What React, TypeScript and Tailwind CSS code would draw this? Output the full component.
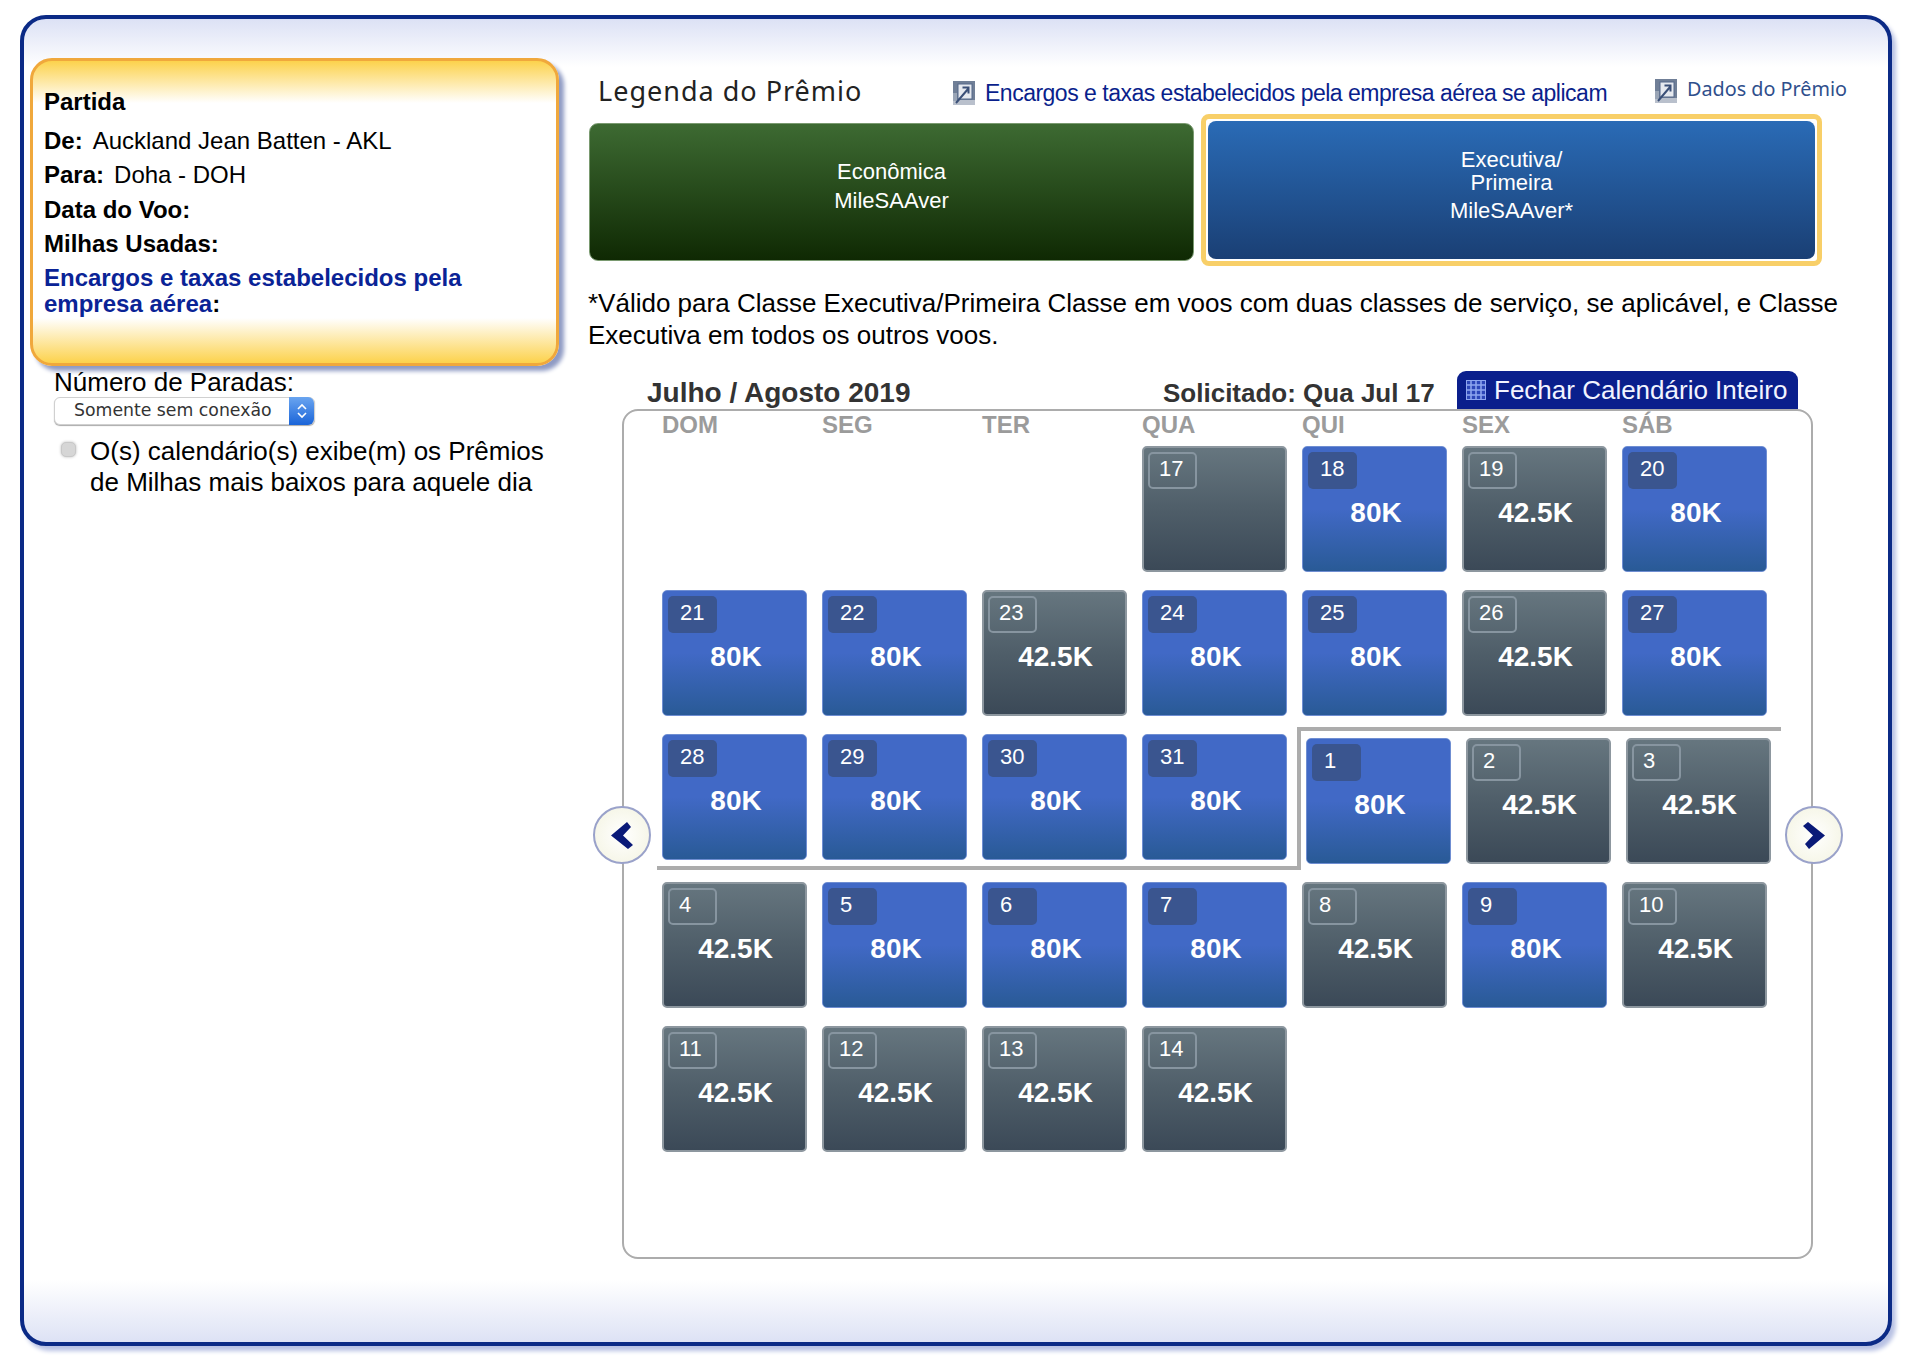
const days = [
  { d: 17 },
  { d: 18, v: '80K' },
  { d: 19, v: '42.5K' },
  { d: 20, v: '80K' },
  { d: 21, v: '80K' },
  { d: 22, v: '80K' },
  { d: 23, v: '42.5K' },
  { d: 24, v: '80K' },
  { d: 25, v: '80K' },
  { d: 26, v: '42.5K' },
  { d: 27, v: '80K' },
  { d: 28, v: '80K' },
  { d: 29, v: '80K' },
  { d: 30, v: '80K' },
  { d: 31, v: '80K' },
  { d: 1, v: '80K', aug: true },
  { d: 2, v: '42.5K', aug: true },
  { d: 3, v: '42.5K', aug: true },
  { d: 4, v: '42.5K' },
  { d: 5, v: '80K' },
  { d: 6, v: '80K' },
  { d: 7, v: '80K' },
  { d: 8, v: '42.5K' },
  { d: 9, v: '80K' },
  { d: 10, v: '42.5K' },
  { d: 11, v: '42.5K' },
  { d: 12, v: '42.5K' },
  { d: 13, v: '42.5K' },
  { d: 14, v: '42.5K' },
];

const weekdays = ['DOM', 'SEG', 'TER', 'QUA', 'QUI', 'SEX', 'SÁB'];

function PopupIcon({ className }: { className: string }) {
  return (
    <svg viewBox="0 0 22 24" className={className}>
      <rect x="0" y="0" width="22" height="24" fill="#707f97" />
      <rect x="0" y="19" width="22" height="5" fill="#b9c0cc" />
      <rect x="0" y="12" width="4" height="8" fill="#9aa5b6" />
      <rect x="5" y="3" width="14" height="15" fill="#e6e9ef" stroke="#55688a" strokeWidth="1" />
      <path d="M3 22 L15 8 M9.5 6.5 H15.5 V12.5" fill="none" stroke="#3b5078" strokeWidth="2" />
    </svg>
  );
}

function DayCell({ d, v, aug }: { d: number; v?: string; aug?: boolean }) {
  const blue = v === '80K';
  return (
    <div
      className={`flex h-[126px] w-[145px] flex-col rounded-[5px] ${aug ? 'mt-1 ml-1' : ''} ${
        blue
          ? 'border border-[#6f8ed2] bg-[linear-gradient(#4169c6_0,#4169c6_50%,#295a96_100%)] pt-[5px] pl-[5px]'
          : 'border-2 border-[#8d979f] bg-[linear-gradient(#66767f_0,#4f5e69_50%,#3b4957_100%)] pt-1 pl-1'
      }`}
    >
      <div
        className={`flex h-[37px] w-[49px] items-center rounded-[5px] pb-[4px] text-[22px] text-white ${
          blue ? 'bg-[#3a558f] pl-[12px]' : 'border-2 border-[#8795a0] pl-[9px]'
        }`}
      >
        {d}
      </div>
      {v && <div className="mt-[7px] pr-[2px] text-center text-[28px] leading-[34px] font-bold text-white">{v}</div>}
    </div>
  );
}

function NavArrow({ side }: { side: 'left' | 'right' }) {
  return (
    <div
      className={`absolute top-[436px] flex h-[58px] w-[58px] items-center justify-center rounded-full border-2 border-[#9aa2ca] bg-[radial-gradient(#fff,#f3f3e0)] ${
        side === 'left' ? '-left-[29px]' : '-right-[30px]'
      }`}
    >
      <svg viewBox="0 0 22 27" className={`h-[27px] w-[22px] ${side === 'right' ? 'rotate-180' : ''}`}>
        <path d="M0 13.5 L16 0 L20 5 L12 13.5 L22 23 L17 27 Z" fill="#0a1a78" />
      </svg>
    </div>
  );
}

export default function App() {
  return (
    <div className="h-[1368px] w-[1922px] bg-white pt-[15px] pl-[20px] font-['Liberation_Sans',Arial,sans-serif] text-black">
      <div className="flex h-[1331px] w-[1872px] rounded-[26px] border-4 border-[#0b2a86] bg-[linear-gradient(#dce1f5_0,#fff_48px,#fff_calc(100%-62px),#dde2f5_100%)] shadow-[4px_5px_4px_#b9c2e4]">
        <div className="w-[564px] shrink-0 pt-[39px] pl-[6px]">
          <div className="h-[308px] w-[529px] rounded-[22px] border-[3px] border-[#f0a83c] bg-[linear-gradient(#fcd24c_0,#fff_42px,#fff_calc(100%-45px),#fcd24c_100%)] px-[11px] pt-[24px] text-[24px] leading-[34.5px] shadow-[5px_5px_4px_#8f9bc4]">
            <div className="font-bold">Partida</div>
            <div className="mt-[4px]">
              <span className="mr-[10px] font-bold">De:</span>Auckland Jean Batten - AKL
            </div>
            <div>
              <span className="mr-[10px] font-bold">Para:</span>Doha - DOH
            </div>
            <div className="font-bold">Data do Voo:</div>
            <div className="font-bold">Milhas Usadas:</div>
            <div className="mt-[3px] leading-[26px] font-bold text-[#0a2396]">
              Encargos e taxas estabelecidos pela
              <br />
              empresa aérea<span className="text-black">:</span>
            </div>
          </div>
          <div className="pl-[24px]">
            <div className="mt-[3px] text-[26px] leading-[27.5px]">Número de Paradas:</div>
            <div className="flex h-[28px] w-[261px] items-center justify-between rounded-[6px] border border-[#d0d0d0] bg-white pl-[19px] shadow-[0_1px_1px_#aaa]">
              <span className="font-['DejaVu_Sans',sans-serif] text-[17.3px] text-[#333]">Somente sem conexão</span>
              <span className="flex h-[28px] w-[25px] flex-col items-center justify-center rounded-r-[6px] bg-[linear-gradient(#6aa5f0,#1a64d8)]">
                <svg viewBox="0 0 12 20" className="h-[20px] w-[12px]">
                  <path d="M2 8 L6 4 L10 8 M2 12 L6 16 L10 12" fill="none" stroke="#fff" strokeWidth="1.6" />
                </svg>
              </span>
            </div>
            <div className="mt-[11px] flex text-[26px] leading-[31px]">
              <span className="mt-[6px] ml-[7px] h-[15px] w-[15px] shrink-0 rounded-[5px] border border-[#c8c8c8] bg-[#d6d6d6] shadow-[0_0_3px_#bbb]" />
              <span className="ml-[14px]">
                O(s) calendário(s) exibe(m) os Prêmios
                <br />
                de Milhas mais baixos para aquele dia
              </span>
            </div>
          </div>
        </div>

        <div className="w-[1290px] pt-[50px]">
          <div className="flex h-[45px] items-start">
            <div className="ml-[10px] w-[355px] font-['Noto_Sans',sans-serif] text-[27px] leading-[44px] tracking-[1px] text-[#222]">
              Legenda do Prêmio
            </div>
            <PopupIcon className="mt-[12px] h-[24px] w-[22px] shrink-0" />
            <div className="mt-[9px] ml-[10px] w-[670px] text-[23px] leading-[30px] tracking-[-0.5px] text-[#0a1f8c]">
              Encargos e taxas estabelecidos pela empresa aérea se aplicam
            </div>
            <PopupIcon className="mt-[10px] h-[24px] w-[22px] shrink-0" />
            <div className="mt-[5px] ml-[10px] font-['Noto_Sans',sans-serif] text-[19.8px] leading-[30px] text-[#2f4f8c]">
              Dados do Prêmio
            </div>
          </div>
          <div className="ml-[1px] flex items-start">
            <div className="mt-[9px] flex h-[138px] w-[605px] flex-col items-center justify-center rounded-[9px] border border-[#7a9a70] bg-[linear-gradient(#3d6a32,#0f2903)] pb-[12px] text-center text-[22px] leading-[29px] text-white">
              Econômica
              <br />
              MileSAAver
            </div>
            <div className="ml-[7px] h-[152px] w-[621px] rounded-[8px] border-[5px] border-[#f8cf68] bg-white p-[2px]">
              <div className="flex h-[138px] flex-col items-center justify-center rounded-[8px] bg-[linear-gradient(#2a6bb6,#1a3f74)] pb-[10px] text-center text-[22px] leading-[23px] text-white">
                Executiva/
                <br />
                Primeira
                <div className="mt-[5px]">MileSAAver*</div>
              </div>
            </div>
          </div>

          <p className="mt-[21px] w-[1285px] text-[26px] leading-[32px]">
            *Válido para Classe Executiva/Primeira Classe em voos com duas classes de serviço, se aplicável, e Classe
            Executiva em todos os outros voos.
          </p>

          <div className="relative mt-[19px] ml-[34px] w-[1191px]">
            <div className="flex h-[39px] items-end text-[#333]">
              <div className="ml-[25px] w-[516px] text-[28px] leading-[32px] font-bold">Julho / Agosto 2019</div>
              <div className="w-[294px] text-[26px] leading-[32px] font-bold">Solicitado: Qua Jul 17</div>
              <div className="flex h-[38px] w-[341px] items-center rounded-t-[9px] bg-[#0a1f8c] pl-[9px] text-[26px] text-[#f2f4ff]">
                <svg viewBox="0 0 20 20" className="mr-[8px] h-[20px] w-[20px]">
                  <rect width="20" height="20" fill="#2c46b8" />
                  <path d="M0 0H20V20H0Z" fill="none" stroke="#8ea6f0" strokeWidth="2" />
                  <path d="M5 0V20 M10 0V20 M15 0V20 M0 5H20 M0 10H20 M0 15H20" stroke="#8ea6f0" strokeWidth="1.5" />
                </svg>
                Fechar Calendário Inteiro
              </div>
            </div>
            <div className="h-[850px] rounded-[16px] border-2 border-[#acacac] bg-white pl-[38px]">
              <div className="grid grid-cols-[repeat(7,160px)] text-[24px] leading-[28px] font-bold text-[#9b9b9b]">
                {weekdays.map(w => (
                  <div key={w}>{w}</div>
                ))}
              </div>
              <div className="mt-[7px] grid grid-cols-[repeat(7,160px)] gap-y-[18px]">
                <div />
                <div />
                <div />
                {days.map(c => (
                  <DayCell key={`${c.d}-${c.aug ? 'a' : 'j'}`} {...c} />
                ))}
              </div>
            </div>
            {/* month divider */}
            <div className="absolute top-[357px] left-[35px] h-[143px] w-[644px] border-r-4 border-b-4 border-[#acacac]" />
            <div className="absolute top-[357px] left-[675px] h-0 w-[484px] border-t-4 border-[#acacac]" />
            <NavArrow side="left" />
            <NavArrow side="right" />
          </div>
        </div>
      </div>
    </div>
  );
}
